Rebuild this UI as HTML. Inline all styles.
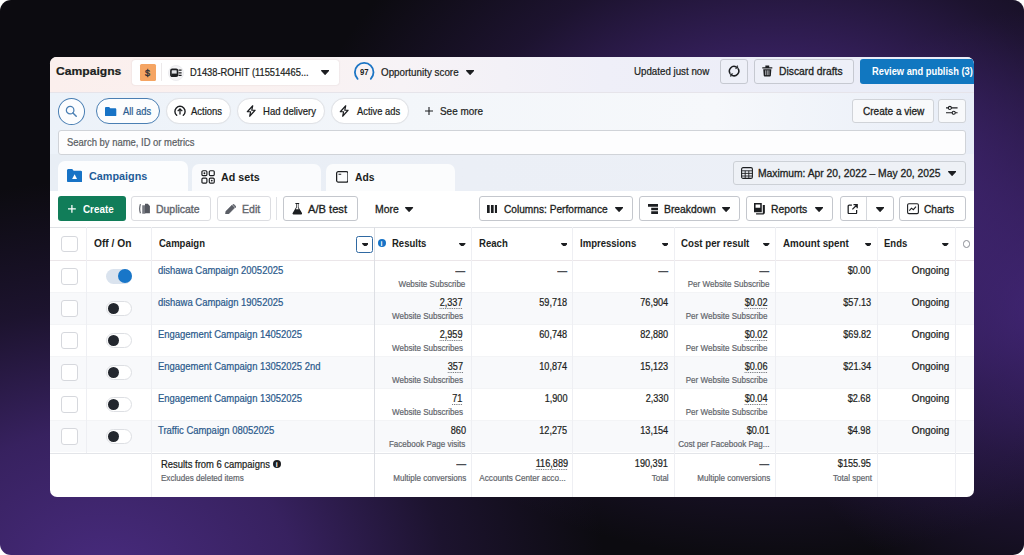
<!DOCTYPE html>
<html><head><meta charset="utf-8"><title>Campaigns</title>
<style>
*{box-sizing:border-box;margin:0;padding:0}
html,body{width:1024px;height:555px;overflow:hidden;background:#fff}
body{font-family:"Liberation Sans",sans-serif;color:#1c1e21;font-size:10px}
#bg{position:absolute;left:0;top:0;width:1024px;height:555px;border-radius:11px;overflow:hidden;
background:
radial-gradient(ellipse 480px 360px at 775px 200px,#45287a 0%,rgba(66,38,116,.78) 38%,rgba(58,33,102,.36) 68%,rgba(50,30,90,0) 100%),
radial-gradient(ellipse 500px 400px at 105px 580px,#482b7e 0%,rgba(72,42,126,.72) 38%,rgba(66,38,116,.3) 68%,rgba(60,35,100,0) 100%),
radial-gradient(ellipse 280px 300px at 1040px 310px,rgba(70,40,128,.9) 0%,rgba(62,35,112,.45) 50%,rgba(58,32,104,0) 100%),
#0c0b10}
#card{position:absolute;left:50px;top:57.4px;width:923.6px;height:439.2px;border-radius:6.5px 7px 7px 7px;overflow:hidden;background:#fff}
.abs{position:absolute}
.t{position:absolute;line-height:1;white-space:nowrap;-webkit-text-stroke:.22px currentColor}
.car{position:absolute;width:0;height:0;border-left:3.8px solid transparent;border-right:3.8px solid transparent}
</style></head><body>
<div id="bg"></div>
<div id="card">
<div class="abs" style="left:0px;top:0px;width:923.6px;height:34.5px;background:linear-gradient(90deg,#fbefed 0%,#faf1f0 22%,#f7f3f6 38%,#efeff8 60%,#e9ecf7 100%)"></div>
<div class="abs" style="left:0px;top:34.5px;width:923.6px;height:0.9px;background:#e6e4ea"></div>
<div class="abs" style="left:0px;top:35.3px;width:923.6px;height:99px;background:linear-gradient(90deg,#ecf2f9 0%,#f3f6fa 38%,#f6f8fb 72%,#eef2f9 88%,#e8edf7 100%)"></div>
<div class="abs" style="left:0px;top:97.1px;width:923.6px;height:37px;background:linear-gradient(90deg,#e8eef5 0%,#ebeff6 45%,#edf0f7 100%)"></div>
<span class="t" style="top:8.11px;font-size:11.8px;left:6.4px;transform:scaleX(1.027);transform-origin:0 0;font-weight:bold;">Campaigns</span>
<div class="abs" style="left:81.8px;top:2.4px;width:207px;height:25.4px;background:#fff;border-radius:3px;box-shadow:0 0 1.5px rgba(120,90,90,.25)"></div>
<div class="abs" style="left:89.8px;top:6.6px;width:16.2px;height:16.9px;background:#f5a563;border-radius:1.5px"></div>
<span class="t" style="top:11.38px;font-size:9px;left:95.1px;color:#2f3036;-webkit-text-stroke-width:0.35px;">$</span>
<div class="abs" style="left:111.3px;top:6.1px;width:1px;height:18px;background:#ece9ea"></div>
<div class="abs" style="left:118px;top:7.3px;width:16.2px;height:16.2px;border-radius:50%;background:#f4f4f6;border:1px solid #ececef"></div>
<svg class="abs" style="left:120.4px;top:10.5px" width="12" height="10" viewBox="0 0 12 10"><rect x="0.900" y="1.400" width="6.600" height="6.800" rx="1.300" fill="#dfe1e5" stroke="#1c1e21" stroke-width="1.600"/><rect x="1.400" y="5.600" width="5.600" height="2.400" fill="#1c1e21"/><path d="M8.500 2.200h3.100M8.500 4.800h3.100M8.500 7.400h3.100" stroke="#1c1e21" stroke-width="1.300"/></svg>
<span class="t" style="top:10.18px;font-size:10.3px;left:140.2px;transform:scaleX(0.904);transform-origin:0 0;">D1438-ROHIT (115514465...</span>
<svg class="abs" style="left:271.2px;top:12.85px" width="8.2" height="4.9" viewBox="0 0 8.2 4.9"><path d="M0.6 0.6H7.6L4.1 4.3z" fill="#1c1e21" stroke="#1c1e21" stroke-width="1.2" stroke-linejoin="round"/></svg>
<svg class="abs" style="left:303px;top:3.7px" width="22.4" height="22.4" viewBox="0 0 22.4 22.4"><path d="M4.62 17.78A9.3 9.3 0 1 1 17.78 17.78" fill="none" stroke="#1b74c4" stroke-width="1.8" stroke-linecap="round"/></svg>
<span class="t" style="top:10.37px;font-size:8.3px;left:309.9px;transform:scaleX(0.932);transform-origin:0 0;font-weight:bold;-webkit-text-stroke-width:0px;">97</span>
<span class="t" style="top:10.18px;font-size:10.3px;left:330.8px;transform:scaleX(0.955);transform-origin:0 0;">Opportunity score</span>
<svg class="abs" style="left:415.6px;top:12.85px" width="8.2" height="4.9" viewBox="0 0 8.2 4.9"><path d="M0.6 0.6H7.6L4.1 4.3z" fill="#1c1e21" stroke="#1c1e21" stroke-width="1.2" stroke-linejoin="round"/></svg>
<span class="t" style="top:9.18px;font-size:10.3px;left:583.8px;transform:scaleX(0.946);transform-origin:0 0;">Updated just now</span>
<div class="abs" style="left:670.3px;top:1.5px;width:27.8px;height:24.8px;border:1px solid #c6c9d1;border-radius:3px;background:#eef0f8"></div>
<svg class="abs" style="left:678.2px;top:7.2px" width="12.2" height="12.2" viewBox="0 0 12 12"><path d="M2.230 8.640A4.600 4.600 0 0 1 8.300 2.020" fill="none" stroke="#1c1e21" stroke-width="1.500"/><path d="M9.770 3.360A4.600 4.600 0 0 1 3.700 9.980" fill="none" stroke="#1c1e21" stroke-width="1.500"/><path d="M9.900 3L7.350 3.670 9.250 .370z" fill="#1c1e21" stroke="#1c1e21" stroke-width=".4" stroke-linejoin="round"/><path d="M2.100 9L4.650 8.330 2.750 11.630z" fill="#1c1e21" stroke="#1c1e21" stroke-width=".4" stroke-linejoin="round"/></svg>
<div class="abs" style="left:703.6px;top:1.5px;width:100.8px;height:24.8px;border:1px solid #c6c9d1;border-radius:3px;background:#eef0f8"></div>
<svg class="abs" style="left:712px;top:8px" width="10.6" height="11.6" viewBox="0 0 11 12"><path d="M0.300 2.200h10.400v1.500H.3zM3.500 .4h4v1.800h-4zM1.300 4.300h8.400l-.5 6.700a1 1 0 0 1-1 .9H2.800a1 1 0 0 1-1-.9z" fill="#1c1e21"/><path d="M3.800 5.500v5M5.500 5.500v5M7.200 5.500v5" stroke="#eff1f8" stroke-width=".7"/></svg>
<span class="t" style="top:8.57px;font-size:10.9px;left:729.4px;transform:scaleX(0.947);transform-origin:0 0;-webkit-text-stroke-width:0.3px;">Discard drafts</span>
<div class="abs" style="left:810.3px;top:1.4px;width:113.3px;height:25px;background:#1177c0;border-radius:3px 0 0 3px"></div>
<span class="t" style="top:9.34px;font-size:10px;left:821.9px;transform:scaleX(0.931);transform-origin:0 0;font-weight:bold;color:#fff;-webkit-text-stroke-width:0px;">Review and publish (3)</span>
<div class="abs" style="left:7.8px;top:40.6px;width:27px;height:26.6px;border:1.3px solid #4a7fb3;border-radius:50%;background:#fcfdfe"></div>
<svg class="abs" style="left:15.2px;top:47.8px" width="12.6" height="12.6" viewBox="0 0 13 13"><circle cx="5.300" cy="5.300" r="3.900" fill="none" stroke="#4a7fb3" stroke-width="1.300"/><path d="M8.200 8.200l3.400 3.400" stroke="#4a7fb3" stroke-width="1.500" stroke-linecap="round"/></svg>
<div class="abs" style="left:46.1px;top:40.6px;width:63.5px;height:26.5px;border:1.3px solid #4a7fb3;border-radius:13.5px;background:#fcfdfe"></div>
<svg class="abs" style="left:55.3px;top:49.4px" width="11.3" height="9.6" viewBox="0 0 12 10"><path d="M0 1.200C0 .5.500 0 1.200 0h3.200l1.200 1.300h5.200c.7 0 1.200.5 1.200 1.200V8.800c0 .7-.5 1.200-1.200 1.200H1.200C.5 10 0 9.500 0 8.800z" fill="#1773c6"/></svg>
<span class="t" style="top:49.37px;font-size:10.2px;left:72.5px;transform:scaleX(0.918);transform-origin:0 0;color:#2a5c8f;">All ads</span>
<div class="abs" style="left:115.9px;top:41px;width:65.4px;height:25.8px;border:1px solid #e0e2e6;border-radius:13px;background:#fff;box-shadow:0 0 1px rgba(0,0,0,.05)"></div>
<svg class="abs" style="left:123.6px;top:48px" width="12" height="12" viewBox="0 0 12 12"><path d="M2.700 10.300A5.100 5.100 0 1 1 9.300 10.300" fill="none" stroke="#1c1e21" stroke-width="1.400" stroke-linecap="round"/><path d="M6 9.600V4M3.700 6.100L6 3.800l2.300 2.300" fill="none" stroke="#1c1e21" stroke-width="1.300"/></svg>
<span class="t" style="top:49.37px;font-size:10.2px;left:141.2px;transform:scaleX(0.927);transform-origin:0 0;">Actions</span>
<div class="abs" style="left:187.4px;top:41px;width:87.2px;height:25.8px;border:1px solid #e0e2e6;border-radius:13px;background:#fff;box-shadow:0 0 1px rgba(0,0,0,.05)"></div>
<svg class="abs" style="left:195.6px;top:48px" width="10.4" height="12" viewBox="0 0 11 13"><path d="M7.200 .8L1.300 7.300h3.600L3.800 12.200 9.700 5.700H6.100z" fill="none" stroke="#1c1e21" stroke-width="1.300" stroke-linejoin="round"/></svg>
<span class="t" style="top:49.37px;font-size:10.2px;left:213.3px;transform:scaleX(0.935);transform-origin:0 0;">Had delivery</span>
<div class="abs" style="left:281.4px;top:41px;width:77.2px;height:25.8px;border:1px solid #e0e2e6;border-radius:13px;background:#fff;box-shadow:0 0 1px rgba(0,0,0,.05)"></div>
<svg class="abs" style="left:289.2px;top:48px" width="10.4" height="12" viewBox="0 0 11 13"><path d="M7.200 .8L1.300 7.300h3.600L3.800 12.200 9.700 5.700H6.100z" fill="none" stroke="#1c1e21" stroke-width="1.300" stroke-linejoin="round"/></svg>
<span class="t" style="top:49.37px;font-size:10.2px;left:306.9px;transform:scaleX(0.916);transform-origin:0 0;">Active ads</span>
<svg class="abs" style="left:375px;top:50px" width="8" height="8" viewBox="0 0 8 8"><path d="M4 0v8M0 4h8" stroke="#1c1e21" stroke-width="1.100"/></svg>
<span class="t" style="top:49.01px;font-size:10.5px;left:389.8px;transform:scaleX(0.945);transform-origin:0 0;">See more</span>
<div class="abs" style="left:801.6px;top:41.3px;width:82.4px;height:24px;border:1px solid #d0d3d8;border-radius:3px;background:#f8f9fb"></div>
<span class="t" style="top:48.44px;font-size:10.7px;left:812.5px;transform:scaleX(0.939);transform-origin:0 0;-webkit-text-stroke-width:0.3px;">Create a view</span>
<div class="abs" style="left:888px;top:41.3px;width:27.5px;height:24px;border:1px solid #d0d3d8;border-radius:3px;background:#f8f9fb"></div>
<svg class="abs" style="left:896px;top:48px" width="11.6" height="10.6" viewBox="0 0 12 11"><path d="M0 3h12M0 8h12" stroke="#1c1e21" stroke-width="1.100"/><circle cx="4" cy="3" r="1.600" fill="#f8f9fb" stroke="#1c1e21" stroke-width="1.100"/><circle cx="8" cy="8" r="1.600" fill="#f8f9fb" stroke="#1c1e21" stroke-width="1.100"/></svg>
<div class="abs" style="left:8.4px;top:72.9px;width:907.4px;height:24.4px;border:1px solid #d0d3d8;border-radius:3px;background:#fdfdfe"></div>
<span class="t" style="top:80.27px;font-size:10.2px;left:17.3px;transform:scaleX(0.927);transform-origin:0 0;color:#5a5d63;">Search by name, ID or metrics</span>
<div class="abs" style="left:8px;top:103.2px;width:129.7px;height:31px;background:#fcfdfe;border-radius:7px 7px 0 0"></div>
<div class="abs" style="left:142.2px;top:106.2px;width:129.2px;height:28px;background:#fafbfd;border-radius:7px 7px 0 0"></div>
<div class="abs" style="left:276.4px;top:106.2px;width:129px;height:28px;background:#fbfcfd;border-radius:7px 7px 0 0"></div>
<svg class="abs" style="left:17.3px;top:111.6px" width="15.2" height="13.5" viewBox="0 0 16 14"><path d="M0 1.500C0 .7.700 0 1.500 0h4l1.500 1.800h7.500c.8 0 1.500.7 1.500 1.500v9.200c0 .8-.7 1.500-1.500 1.500h-13C.7 14 0 13.300 0 12.500z" fill="#1773c6"/><path d="M8 5.500l2.600 5H5.400z" fill="#fff"/></svg>
<span class="t" style="top:113.23px;font-size:11.3px;left:39.2px;transform:scaleX(0.957);transform-origin:0 0;font-weight:bold;color:#1f5c98;-webkit-text-stroke-width:0px;">Campaigns</span>
<svg class="abs" style="left:151px;top:112.8px" width="14.2" height="13.8" viewBox="0 0 15 15"><g fill="none" stroke="#1c1e21" stroke-width="1.300"><rect x=".8" y=".8" width="5.400" height="5.400" rx="1.200"/><rect x="8.800" y=".8" width="5.400" height="5.400" rx="1.200"/><rect x=".8" y="8.800" width="5.400" height="5.400" rx="1.200"/><rect x="8.800" y="8.800" width="5.400" height="5.400" rx="1.200"/></g><circle cx="3.500" cy="3.500" r="1" fill="#1c1e21"/><circle cx="11.500" cy="11.500" r="1" fill="#1c1e21"/></svg>
<span class="t" style="top:114.31px;font-size:11.8px;left:171px;transform:scaleX(0.908);transform-origin:0 0;font-weight:bold;-webkit-text-stroke-width:0px;">Ad sets</span>
<svg class="abs" style="left:285.8px;top:113.6px" width="12.6" height="11.8" viewBox="0 0 14 13"><rect x=".7" y=".7" width="12.600" height="11.600" rx="1.800" fill="none" stroke="#1c1e21" stroke-width="1.400"/><path d="M2.800 3.500h3" stroke="#1c1e21" stroke-width="1.200"/></svg>
<span class="t" style="top:114.31px;font-size:11.8px;left:305.3px;transform:scaleX(0.875);transform-origin:0 0;font-weight:bold;-webkit-text-stroke-width:0px;">Ads</span>
<div class="abs" style="left:683px;top:103.5px;width:232.6px;height:24.5px;border:1px solid #ccd0d6;border-radius:3px;background:#eef1f6"></div>
<svg class="abs" style="left:690.5px;top:109.9px" width="12" height="12" viewBox="0 0 12 12"><rect x=".6" y=".6" width="10.800" height="10.800" rx="1.500" fill="none" stroke="#1c1e21" stroke-width="1.100"/><path d="M.6 3.800h10.800M.6 6.400h10.800M.6 9h10.800M4.200 3.800v7.600M7.800 3.800v7.600" stroke="#1c1e21" stroke-width=".9"/></svg>
<span class="t" style="top:110.51px;font-size:10.5px;left:708px;transform:scaleX(0.980);transform-origin:0 0;-webkit-text-stroke-width:0.3px;">Maximum: Apr 20, 2022 – May 20, 2025</span>
<svg class="abs" style="left:897.7px;top:113.45px" width="8.2" height="4.9" viewBox="0 0 8.2 4.9"><path d="M0.6 0.6H7.6L4.1 4.3z" fill="#1c1e21" stroke="#1c1e21" stroke-width="1.2" stroke-linejoin="round"/></svg>
<div class="abs" style="left:0px;top:134px;width:923.6px;height:36px;background:#fff"></div>
<div class="abs" style="left:8.1px;top:138.8px;width:67.6px;height:25.3px;background:#117d59;border-radius:3px"></div>
<svg class="abs" style="left:18px;top:147.6px" width="7.8" height="7.8" viewBox="0 0 8 8"><path d="M4 0v8M0 4h8" stroke="#fff" stroke-width="1.300"/></svg>
<span class="t" style="top:147.37px;font-size:10.2px;left:33.3px;transform:scaleX(0.967);transform-origin:0 0;font-weight:bold;color:#fff;-webkit-text-stroke-width:0px;">Create</span>
<div class="abs" style="left:81.2px;top:138.8px;width:79.4px;height:25.3px;border:1px solid #dcdde1;border-radius:3px;background:#fff"></div>
<svg class="abs" style="left:89.4px;top:145.8px" width="11.4" height="11.4" viewBox="0 0 12 12"><path d="M1.500 1.200Q-.1 6 1.500 10.800" fill="none" stroke="#5b5e66" stroke-width="1.200"/><path d="M3.400 2.300h3.200v9h-3.200z" fill="#777a82"/><path d="M6.300 .8h2.900l2.300 2.300v7.700H6.300z" fill="#54575f"/></svg>
<span class="t" style="top:147.01px;font-size:10.5px;left:106.2px;transform:scaleX(0.994);transform-origin:0 0;color:#63666d;-webkit-text-stroke-width:0.35px;">Duplicate</span>
<div class="abs" style="left:166.7px;top:138.8px;width:54.3px;height:25.3px;border:1px solid #dcdde1;border-radius:3px;background:#fff"></div>
<svg class="abs" style="left:175.2px;top:146.2px" width="10.8" height="10.8" viewBox="0 0 11 11"><path d="M.2 10.800l.7-3.500 6.200-6.200 2.800 2.800-6.200 6.200zM7.900 .7l.7-.7 3 3-.7.700z" fill="#5b5e66" stroke="#5b5e66" stroke-width=".5" stroke-linejoin="round"/></svg>
<span class="t" style="top:147.01px;font-size:10.5px;left:191.8px;transform:scaleX(1.006);transform-origin:0 0;color:#63666d;-webkit-text-stroke-width:0.35px;">Edit</span>
<div class="abs" style="left:226.2px;top:139.6px;width:1px;height:23.5px;background:#e0e2e6"></div>
<div class="abs" style="left:233px;top:138.8px;width:74.8px;height:25.3px;border:1px solid #c4c7cd;border-radius:3px;background:#fff"></div>
<svg class="abs" style="left:241.6px;top:146px" width="10.6" height="11.4" viewBox="0 0 11 12"><path d="M3.500 0h4v1h-.7v3.500l3.700 6.200c.3.600-.1 1.300-.8 1.300H1.300c-.7 0-1.100-.7-.8-1.300l3.700-6.200V1h-.7z" fill="#1c1e21"/><path d="M4.900 1h1.200v3.900l1 1.700H3.900l1-1.700z" fill="#fff"/></svg>
<span class="t" style="top:147.01px;font-size:10.5px;left:258px;transform:scaleX(1.061);transform-origin:0 0;-webkit-text-stroke-width:0.3px;">A/B test</span>
<span class="t" style="top:147.01px;font-size:10.5px;left:325px;transform:scaleX(0.993);transform-origin:0 0;-webkit-text-stroke-width:0.3px;">More</span>
<svg class="abs" style="left:355.4px;top:149.35px" width="8.2" height="4.9" viewBox="0 0 8.2 4.9"><path d="M0.6 0.6H7.6L4.1 4.3z" fill="#1c1e21" stroke="#1c1e21" stroke-width="1.2" stroke-linejoin="round"/></svg>
<div class="abs" style="left:429px;top:138.8px;width:154.2px;height:25.3px;border:1px solid #c4c7cd;border-radius:3px;background:#fff"></div>
<svg class="abs" style="left:436.8px;top:147.2px" width="10.6" height="8.8" viewBox="0 0 11 9"><path d="M0 0h2.800v9H0zM4.100 0h2.800v9H4.100zM8.200 0H11v9H8.200z" fill="#1c1e21"/></svg>
<span class="t" style="top:147.01px;font-size:10.5px;left:453.8px;transform:scaleX(0.966);transform-origin:0 0;-webkit-text-stroke-width:0.3px;">Columns: Performance</span>
<svg class="abs" style="left:565.3px;top:149.35px" width="8.2" height="4.9" viewBox="0 0 8.2 4.9"><path d="M0.6 0.6H7.6L4.1 4.3z" fill="#1c1e21" stroke="#1c1e21" stroke-width="1.2" stroke-linejoin="round"/></svg>
<div class="abs" style="left:589.2px;top:138.8px;width:100.4px;height:25.3px;border:1px solid #c4c7cd;border-radius:3px;background:#fff"></div>
<svg class="abs" style="left:597.8px;top:146.6px" width="10" height="10" viewBox="0 0 10 10"><path d="M0 0h10v2.700H0zM3.200 3.650H10v2.700H3.200zM3.200 7.300H10V10H3.200z" fill="#1c1e21"/></svg>
<span class="t" style="top:147.01px;font-size:10.5px;left:613.8px;transform:scaleX(0.985);transform-origin:0 0;-webkit-text-stroke-width:0.3px;">Breakdown</span>
<svg class="abs" style="left:671.5px;top:149.35px" width="8.2" height="4.9" viewBox="0 0 8.2 4.9"><path d="M0.6 0.6H7.6L4.1 4.3z" fill="#1c1e21" stroke="#1c1e21" stroke-width="1.2" stroke-linejoin="round"/></svg>
<div class="abs" style="left:695.8px;top:138.8px;width:86.8px;height:25.3px;border:1px solid #c4c7cd;border-radius:3px;background:#fff"></div>
<svg class="abs" style="left:703.8px;top:146px" width="11.4" height="11.4" viewBox="0 0 11 11"><path d="M0 0h7.500v9H0z" fill="#1c1e21"/><path d="M1.500 1.500h4.500v3H1.500z" fill="#fff"/><path d="M8.500 2h2v7.500c0 .8-.7 1.500-1.500 1.500H2v-1h6.500z" fill="#1c1e21"/></svg>
<span class="t" style="top:147.01px;font-size:10.5px;left:721.2px;transform:scaleX(0.986);transform-origin:0 0;-webkit-text-stroke-width:0.3px;">Reports</span>
<svg class="abs" style="left:765.2px;top:149.35px" width="8.2" height="4.9" viewBox="0 0 8.2 4.9"><path d="M0.6 0.6H7.6L4.1 4.3z" fill="#1c1e21" stroke="#1c1e21" stroke-width="1.2" stroke-linejoin="round"/></svg>
<div class="abs" style="left:789.5px;top:138.8px;width:54px;height:25.3px;border:1px solid #c4c7cd;border-radius:3px;background:#fff"></div>
<div class="abs" style="left:816px;top:139.9px;width:1px;height:23px;background:#d4d7dc"></div>
<svg class="abs" style="left:797.3px;top:146.2px" width="10.8" height="10.8" viewBox="0 0 11 11"><path d="M5 1.200H2.200c-.6 0-1 .4-1 1v6.600c0 .6.400 1 1 1h6.600c.6 0 1-.4 1-1V6" fill="none" stroke="#1c1e21" stroke-width="1.300"/><path d="M6.600 .6h3.800v3.800M10.200 .8L5.500 5.500" fill="none" stroke="#1c1e21" stroke-width="1.300"/></svg>
<svg class="abs" style="left:825.5px;top:149.35px" width="8.2" height="4.9" viewBox="0 0 8.2 4.9"><path d="M0.6 0.6H7.6L4.1 4.3z" fill="#1c1e21" stroke="#1c1e21" stroke-width="1.2" stroke-linejoin="round"/></svg>
<div class="abs" style="left:849px;top:138.8px;width:66.6px;height:25.3px;border:1px solid #c4c7cd;border-radius:3px;background:#fff"></div>
<svg class="abs" style="left:856.8px;top:145.9px" width="12" height="11.4" viewBox="0 0 12 11"><rect x=".6" y=".6" width="10.800" height="9.800" rx="1.300" fill="none" stroke="#1c1e21" stroke-width="1.100"/><path d="M2.300 7.500l2.200-2.500 1.800 1.500 2.700-3" fill="none" stroke="#1c1e21" stroke-width="1.100"/></svg>
<span class="t" style="top:147.01px;font-size:10.5px;left:874.2px;transform:scaleX(0.970);transform-origin:0 0;-webkit-text-stroke-width:0.3px;">Charts</span>
<div class="abs" style="left:0px;top:169.3px;width:923.6px;height:1px;background:#dfe1e5"></div>
<div class="abs" style="left:0px;top:202.8px;width:923.6px;height:1px;background:#ebe6e9"></div>
<div class="abs" style="left:11px;top:178.4px;width:16.8px;height:16.7px;border:1px solid #d6d8dd;border-radius:3px;background:#fff"></div>
<span class="t" style="top:181.9px;font-size:10.4px;left:43.8px;transform:scaleX(0.984);transform-origin:0 0;font-weight:bold;-webkit-text-stroke-width:0px;">Off / On</span>
<span class="t" style="top:181.9px;font-size:10.4px;left:109px;transform:scaleX(0.915);transform-origin:0 0;font-weight:bold;-webkit-text-stroke-width:0px;">Campaign</span>
<div class="abs" style="left:306.4px;top:178.6px;width:16.7px;height:16.9px;border:1.6px solid #2f69a2;border-radius:2.5px;background:#fff"></div>
<svg class="abs" style="left:311.7px;top:185.3px" width="6.6" height="3.8" viewBox="0 0 6.6 3.8"><path d="M0.6 0.6H6L3.3 3.2z" fill="#1c1e21" stroke="#1c1e21" stroke-width="1.2" stroke-linejoin="round"/></svg>
<div class="abs" style="left:327.5px;top:181.3px;width:8.2px;height:8.2px;border-radius:50%;background:#1773c6"></div>
<span class="t" style="top:182.57px;font-size:7px;left:330.6px;font-weight:bold;color:#fff;-webkit-text-stroke-width:0px;">i</span>
<span class="t" style="top:181.9px;font-size:10.4px;left:341.6px;transform:scaleX(0.916);transform-origin:0 0;font-weight:bold;-webkit-text-stroke-width:0px;">Results</span>
<svg class="abs" style="left:409.3px;top:185.3px" width="6.6" height="3.8" viewBox="0 0 6.6 3.8"><path d="M0.6 0.6H6L3.3 3.2z" fill="#1c1e21" stroke="#1c1e21" stroke-width="1.2" stroke-linejoin="round"/></svg>
<span class="t" style="top:181.9px;font-size:10.4px;left:428.8px;transform:scaleX(0.921);transform-origin:0 0;font-weight:bold;-webkit-text-stroke-width:0px;">Reach</span>
<svg class="abs" style="left:510.5px;top:185.3px" width="6.6" height="3.8" viewBox="0 0 6.6 3.8"><path d="M0.6 0.6H6L3.3 3.2z" fill="#1c1e21" stroke="#1c1e21" stroke-width="1.2" stroke-linejoin="round"/></svg>
<span class="t" style="top:181.9px;font-size:10.4px;left:530px;transform:scaleX(0.918);transform-origin:0 0;font-weight:bold;-webkit-text-stroke-width:0px;">Impressions</span>
<svg class="abs" style="left:611.9px;top:185.3px" width="6.6" height="3.8" viewBox="0 0 6.6 3.8"><path d="M0.6 0.6H6L3.3 3.2z" fill="#1c1e21" stroke="#1c1e21" stroke-width="1.2" stroke-linejoin="round"/></svg>
<span class="t" style="top:181.9px;font-size:10.4px;left:631.2px;transform:scaleX(0.932);transform-origin:0 0;font-weight:bold;-webkit-text-stroke-width:0px;">Cost per result</span>
<svg class="abs" style="left:713.3px;top:185.3px" width="6.6" height="3.8" viewBox="0 0 6.6 3.8"><path d="M0.6 0.6H6L3.3 3.2z" fill="#1c1e21" stroke="#1c1e21" stroke-width="1.2" stroke-linejoin="round"/></svg>
<span class="t" style="top:181.9px;font-size:10.4px;left:732.5px;transform:scaleX(0.941);transform-origin:0 0;font-weight:bold;-webkit-text-stroke-width:0px;">Amount spent</span>
<svg class="abs" style="left:814.7px;top:185.3px" width="6.6" height="3.8" viewBox="0 0 6.6 3.8"><path d="M0.6 0.6H6L3.3 3.2z" fill="#1c1e21" stroke="#1c1e21" stroke-width="1.2" stroke-linejoin="round"/></svg>
<span class="t" style="top:181.9px;font-size:10.4px;left:833.8px;transform:scaleX(0.914);transform-origin:0 0;font-weight:bold;-webkit-text-stroke-width:0px;">Ends</span>
<svg class="abs" style="left:892.2px;top:185.3px" width="6.6" height="3.8" viewBox="0 0 6.6 3.8"><path d="M0.6 0.6H6L3.3 3.2z" fill="#1c1e21" stroke="#1c1e21" stroke-width="1.2" stroke-linejoin="round"/></svg>
<div class="abs" style="left:912.6px;top:182.6px;width:7.6px;height:7.6px;border:1.2px solid #8a8d94;border-radius:50%"></div>
<div class="abs" style="left:0px;top:234.8px;width:923.6px;height:1px;background:#f3f4f6"></div>
<div class="abs" style="left:11px;top:210.6px;width:16.8px;height:16.7px;border:1px solid #d6d8dd;border-radius:3px;background:#fff"></div>
<div class="abs" style="left:56.2px;top:211.6px;width:25.8px;height:15px;border-radius:8px;background:#dae3ee"></div>
<div class="abs" style="left:67.6px;top:211.7px;width:14.4px;height:14.4px;border-radius:50%;background:#1876c8"></div>
<span class="t" style="top:209.03px;font-size:10px;left:107.6px;transform:scaleX(0.946);transform-origin:0 0;color:#2b5a8c;">dishawa Campaign 20052025</span>
<span class="t" style="top:209.17px;font-size:10.2px;right:508px;transform:scaleX(0.980);transform-origin:100% 0;font-weight:bold;color:#4a4d53;-webkit-text-stroke-width:0px;">—</span>
<span class="t" style="top:222.43px;font-size:9.3px;right:508px;transform:scaleX(0.865);transform-origin:100% 0;color:#62656b;">Website Subscribe</span>
<span class="t" style="top:209.17px;font-size:10.2px;right:406.6px;transform:scaleX(0.980);transform-origin:100% 0;font-weight:bold;color:#4a4d53;-webkit-text-stroke-width:0px;">—</span>
<span class="t" style="top:209.17px;font-size:10.2px;right:305.4px;transform:scaleX(0.980);transform-origin:100% 0;font-weight:bold;color:#4a4d53;-webkit-text-stroke-width:0px;">—</span>
<span class="t" style="top:209.17px;font-size:10.2px;right:204.2px;transform:scaleX(0.980);transform-origin:100% 0;font-weight:bold;color:#4a4d53;-webkit-text-stroke-width:0px;">—</span>
<span class="t" style="top:222.43px;font-size:9.3px;right:204px;transform:scaleX(0.865);transform-origin:100% 0;color:#62656b;">Per Website Subscribe</span>
<span class="t" style="top:208.87px;font-size:10.2px;right:102.8px;transform:scaleX(0.897);transform-origin:100% 0;">$0.00</span>
<span class="t" style="top:208.7px;font-size:10.4px;right:24.6px;transform:scaleX(0.957);transform-origin:100% 0;">Ongoing</span>
<div class="abs" style="left:0px;top:235.3px;width:923.6px;height:31.5px;background:#f8f9fb"></div>
<div class="abs" style="left:0px;top:266.8px;width:923.6px;height:1px;background:#f3f4f6"></div>
<div class="abs" style="left:11px;top:242.6px;width:16.8px;height:16.7px;border:1px solid #d6d8dd;border-radius:3px;background:#fff"></div>
<div class="abs" style="left:56px;top:243.6px;width:26.4px;height:15px;border-radius:8px;background:#fff;border:1px solid #dddfe3"></div>
<div class="abs" style="left:58px;top:245.4px;width:11.4px;height:11.4px;border-radius:50%;background:#23272e"></div>
<span class="t" style="top:241.03px;font-size:10px;left:107.6px;transform:scaleX(0.946);transform-origin:0 0;color:#2b5a8c;">dishawa Campaign 19052025</span>
<span class="t" style="top:240.87px;font-size:10.2px;right:511px;transform:scaleX(0.897);transform-origin:100% 0;text-decoration:underline dotted #6a6d73;text-decoration-thickness:1px;text-underline-offset:1.5px;">2,337</span>
<span class="t" style="top:254.43px;font-size:9.3px;right:510.8px;transform:scaleX(0.865);transform-origin:100% 0;color:#62656b;">Website Subscribes</span>
<span class="t" style="top:240.87px;font-size:10.2px;right:406.6px;transform:scaleX(0.897);transform-origin:100% 0;">59,718</span>
<span class="t" style="top:240.87px;font-size:10.2px;right:305.4px;transform:scaleX(0.897);transform-origin:100% 0;">76,904</span>
<span class="t" style="top:240.87px;font-size:10.2px;right:206.6px;transform:scaleX(0.897);transform-origin:100% 0;text-decoration:underline dotted #6a6d73;text-decoration-thickness:1px;text-underline-offset:1.5px;">$0.02</span>
<span class="t" style="top:254.43px;font-size:9.3px;right:206.6px;transform:scaleX(0.865);transform-origin:100% 0;color:#62656b;">Per Website Subscribe</span>
<span class="t" style="top:240.87px;font-size:10.2px;right:102.8px;transform:scaleX(0.897);transform-origin:100% 0;">$57.13</span>
<span class="t" style="top:240.7px;font-size:10.4px;right:24.6px;transform:scaleX(0.957);transform-origin:100% 0;">Ongoing</span>
<div class="abs" style="left:0px;top:298.8px;width:923.6px;height:1px;background:#f3f4f6"></div>
<div class="abs" style="left:11px;top:274.6px;width:16.8px;height:16.7px;border:1px solid #d6d8dd;border-radius:3px;background:#fff"></div>
<div class="abs" style="left:56px;top:275.6px;width:26.4px;height:15px;border-radius:8px;background:#fff;border:1px solid #dddfe3"></div>
<div class="abs" style="left:58px;top:277.4px;width:11.4px;height:11.4px;border-radius:50%;background:#23272e"></div>
<span class="t" style="top:273.04px;font-size:10px;left:107.6px;transform:scaleX(0.946);transform-origin:0 0;color:#2b5a8c;">Engagement Campaign 14052025</span>
<span class="t" style="top:272.87px;font-size:10.2px;right:511px;transform:scaleX(0.897);transform-origin:100% 0;text-decoration:underline dotted #6a6d73;text-decoration-thickness:1px;text-underline-offset:1.5px;">2,959</span>
<span class="t" style="top:286.43px;font-size:9.3px;right:510.8px;transform:scaleX(0.865);transform-origin:100% 0;color:#62656b;">Website Subscribes</span>
<span class="t" style="top:272.87px;font-size:10.2px;right:406.6px;transform:scaleX(0.897);transform-origin:100% 0;">60,748</span>
<span class="t" style="top:272.87px;font-size:10.2px;right:305.4px;transform:scaleX(0.897);transform-origin:100% 0;">82,880</span>
<span class="t" style="top:272.87px;font-size:10.2px;right:206.6px;transform:scaleX(0.897);transform-origin:100% 0;text-decoration:underline dotted #6a6d73;text-decoration-thickness:1px;text-underline-offset:1.5px;">$0.02</span>
<span class="t" style="top:286.43px;font-size:9.3px;right:206.6px;transform:scaleX(0.865);transform-origin:100% 0;color:#62656b;">Per Website Subscribe</span>
<span class="t" style="top:272.87px;font-size:10.2px;right:102.8px;transform:scaleX(0.897);transform-origin:100% 0;">$69.82</span>
<span class="t" style="top:272.7px;font-size:10.4px;right:24.6px;transform:scaleX(0.957);transform-origin:100% 0;">Ongoing</span>
<div class="abs" style="left:0px;top:299.3px;width:923.6px;height:31.5px;background:#f8f9fb"></div>
<div class="abs" style="left:0px;top:330.8px;width:923.6px;height:1px;background:#f3f4f6"></div>
<div class="abs" style="left:11px;top:306.6px;width:16.8px;height:16.7px;border:1px solid #d6d8dd;border-radius:3px;background:#fff"></div>
<div class="abs" style="left:56px;top:307.6px;width:26.4px;height:15px;border-radius:8px;background:#fff;border:1px solid #dddfe3"></div>
<div class="abs" style="left:58px;top:309.4px;width:11.4px;height:11.4px;border-radius:50%;background:#23272e"></div>
<span class="t" style="top:305.04px;font-size:10px;left:107.6px;transform:scaleX(0.946);transform-origin:0 0;color:#2b5a8c;">Engagement Campaign 13052025 2nd</span>
<span class="t" style="top:304.87px;font-size:10.2px;right:511px;transform:scaleX(0.897);transform-origin:100% 0;text-decoration:underline dotted #6a6d73;text-decoration-thickness:1px;text-underline-offset:1.5px;">357</span>
<span class="t" style="top:318.43px;font-size:9.3px;right:510.8px;transform:scaleX(0.865);transform-origin:100% 0;color:#62656b;">Website Subscribes</span>
<span class="t" style="top:304.87px;font-size:10.2px;right:406.6px;transform:scaleX(0.897);transform-origin:100% 0;">10,874</span>
<span class="t" style="top:304.87px;font-size:10.2px;right:305.4px;transform:scaleX(0.897);transform-origin:100% 0;">15,123</span>
<span class="t" style="top:304.87px;font-size:10.2px;right:206.6px;transform:scaleX(0.897);transform-origin:100% 0;text-decoration:underline dotted #6a6d73;text-decoration-thickness:1px;text-underline-offset:1.5px;">$0.06</span>
<span class="t" style="top:318.43px;font-size:9.3px;right:206.6px;transform:scaleX(0.865);transform-origin:100% 0;color:#62656b;">Per Website Subscribe</span>
<span class="t" style="top:304.87px;font-size:10.2px;right:102.8px;transform:scaleX(0.897);transform-origin:100% 0;">$21.34</span>
<span class="t" style="top:304.7px;font-size:10.4px;right:24.6px;transform:scaleX(0.957);transform-origin:100% 0;">Ongoing</span>
<div class="abs" style="left:0px;top:362.8px;width:923.6px;height:1px;background:#f3f4f6"></div>
<div class="abs" style="left:11px;top:338.6px;width:16.8px;height:16.7px;border:1px solid #d6d8dd;border-radius:3px;background:#fff"></div>
<div class="abs" style="left:56px;top:339.6px;width:26.4px;height:15px;border-radius:8px;background:#fff;border:1px solid #dddfe3"></div>
<div class="abs" style="left:58px;top:341.4px;width:11.4px;height:11.4px;border-radius:50%;background:#23272e"></div>
<span class="t" style="top:337.04px;font-size:10px;left:107.6px;transform:scaleX(0.946);transform-origin:0 0;color:#2b5a8c;">Engagement Campaign 13052025</span>
<span class="t" style="top:336.87px;font-size:10.2px;right:511px;transform:scaleX(0.897);transform-origin:100% 0;text-decoration:underline dotted #6a6d73;text-decoration-thickness:1px;text-underline-offset:1.5px;">71</span>
<span class="t" style="top:350.43px;font-size:9.3px;right:510.8px;transform:scaleX(0.865);transform-origin:100% 0;color:#62656b;">Website Subscribes</span>
<span class="t" style="top:336.87px;font-size:10.2px;right:406.6px;transform:scaleX(0.897);transform-origin:100% 0;">1,900</span>
<span class="t" style="top:336.87px;font-size:10.2px;right:305.4px;transform:scaleX(0.897);transform-origin:100% 0;">2,330</span>
<span class="t" style="top:336.87px;font-size:10.2px;right:206.6px;transform:scaleX(0.897);transform-origin:100% 0;text-decoration:underline dotted #6a6d73;text-decoration-thickness:1px;text-underline-offset:1.5px;">$0.04</span>
<span class="t" style="top:350.43px;font-size:9.3px;right:206.6px;transform:scaleX(0.865);transform-origin:100% 0;color:#62656b;">Per Website Subscribe</span>
<span class="t" style="top:336.87px;font-size:10.2px;right:102.8px;transform:scaleX(0.897);transform-origin:100% 0;">$2.68</span>
<span class="t" style="top:336.7px;font-size:10.4px;right:24.6px;transform:scaleX(0.957);transform-origin:100% 0;">Ongoing</span>
<div class="abs" style="left:0px;top:363.3px;width:923.6px;height:31.5px;background:#f8f9fb"></div>
<div class="abs" style="left:11px;top:370.6px;width:16.8px;height:16.7px;border:1px solid #d6d8dd;border-radius:3px;background:#fff"></div>
<div class="abs" style="left:56px;top:371.6px;width:26.4px;height:15px;border-radius:8px;background:#fff;border:1px solid #dddfe3"></div>
<div class="abs" style="left:58px;top:373.4px;width:11.4px;height:11.4px;border-radius:50%;background:#23272e"></div>
<span class="t" style="top:369.04px;font-size:10px;left:107.6px;transform:scaleX(0.946);transform-origin:0 0;color:#2b5a8c;">Traffic Campaign 08052025</span>
<span class="t" style="top:368.87px;font-size:10.2px;right:508px;transform:scaleX(0.897);transform-origin:100% 0;">860</span>
<span class="t" style="top:382.43px;font-size:9.3px;right:508px;transform:scaleX(0.865);transform-origin:100% 0;color:#62656b;">Facebook Page visits</span>
<span class="t" style="top:368.87px;font-size:10.2px;right:406.6px;transform:scaleX(0.897);transform-origin:100% 0;">12,275</span>
<span class="t" style="top:368.87px;font-size:10.2px;right:305.4px;transform:scaleX(0.897);transform-origin:100% 0;">13,154</span>
<span class="t" style="top:368.87px;font-size:10.2px;right:204.2px;transform:scaleX(0.897);transform-origin:100% 0;">$0.01</span>
<span class="t" style="top:382.43px;font-size:9.3px;right:204px;transform:scaleX(0.865);transform-origin:100% 0;color:#62656b;">Cost per Facebook Pag...</span>
<span class="t" style="top:368.87px;font-size:10.2px;right:102.8px;transform:scaleX(0.897);transform-origin:100% 0;">$4.98</span>
<span class="t" style="top:368.7px;font-size:10.4px;right:24.6px;transform:scaleX(0.957);transform-origin:100% 0;">Ongoing</span>
<div class="abs" style="left:0px;top:395.2px;width:923.6px;height:1px;background:#e3e5e9"></div>
<span class="t" style="top:401.81px;font-size:10.5px;left:110.6px;transform:scaleX(0.897);transform-origin:0 0;">Results from 6 campaigns</span>
<div class="abs" style="left:222.7px;top:402.3px;width:8.2px;height:8.2px;border-radius:50%;background:#1c1e21"></div>
<span class="t" style="top:403.57px;font-size:7px;left:225.8px;font-weight:bold;color:#fff;-webkit-text-stroke-width:0px;">i</span>
<span class="t" style="top:416.43px;font-size:9.3px;left:110.6px;transform:scaleX(0.866);transform-origin:0 0;color:#62656b;">Excludes deleted items</span>
<span class="t" style="top:402.37px;font-size:10.2px;right:507.8px;transform:scaleX(0.980);transform-origin:100% 0;font-weight:bold;color:#4a4d53;-webkit-text-stroke-width:0px;">—</span>
<span class="t" style="top:416.43px;font-size:9.3px;right:507px;transform:scaleX(0.865);transform-origin:100% 0;color:#62656b;">Multiple conversions</span>
<span class="t" style="top:402.07px;font-size:10.2px;right:406px;transform:scaleX(0.897);transform-origin:100% 0;text-decoration:underline dotted #6a6d73;text-decoration-thickness:1px;text-underline-offset:1.5px;">116,889</span>
<span class="t" style="top:416.43px;font-size:9.3px;right:408.4px;transform:scaleX(0.875);transform-origin:100% 0;color:#62656b;">Accounts Center acco...</span>
<span class="t" style="top:402.07px;font-size:10.2px;right:305.4px;transform:scaleX(0.897);transform-origin:100% 0;">190,391</span>
<span class="t" style="top:416.43px;font-size:9.3px;right:305px;transform:scaleX(0.865);transform-origin:100% 0;color:#62656b;">Total</span>
<span class="t" style="top:402.37px;font-size:10.2px;right:204px;transform:scaleX(0.980);transform-origin:100% 0;font-weight:bold;color:#4a4d53;-webkit-text-stroke-width:0px;">—</span>
<span class="t" style="top:416.43px;font-size:9.3px;right:203.2px;transform:scaleX(0.865);transform-origin:100% 0;color:#62656b;">Multiple conversions</span>
<span class="t" style="top:402.07px;font-size:10.2px;right:102.8px;transform:scaleX(0.897);transform-origin:100% 0;">$155.95</span>
<span class="t" style="top:416.43px;font-size:9.3px;right:102px;transform:scaleX(0.865);transform-origin:100% 0;color:#62656b;">Total spent</span>
<div class="abs" style="left:36.2px;top:169.6px;width:1px;height:225.6px;background:#eeeff3"></div>
<div class="abs" style="left:101.4px;top:169.6px;width:1px;height:269.6px;background:#eeeff3"></div>
<div class="abs" style="left:324.2px;top:169.6px;width:1.2px;height:269.6px;background:#dddfe4"></div>
<div class="abs" style="left:421.4px;top:169.6px;width:1px;height:269.6px;background:#eeeff3"></div>
<div class="abs" style="left:522.4px;top:169.6px;width:1px;height:269.6px;background:#eeeff3"></div>
<div class="abs" style="left:623.8px;top:169.6px;width:1px;height:269.6px;background:#eeeff3"></div>
<div class="abs" style="left:725.4px;top:169.6px;width:1px;height:269.6px;background:#eeeff3"></div>
<div class="abs" style="left:826.8px;top:169.6px;width:1px;height:269.6px;background:#eeeff3"></div>
<div class="abs" style="left:905px;top:169.6px;width:1px;height:269.6px;background:#eeeff3"></div>
</div>
</body></html>
